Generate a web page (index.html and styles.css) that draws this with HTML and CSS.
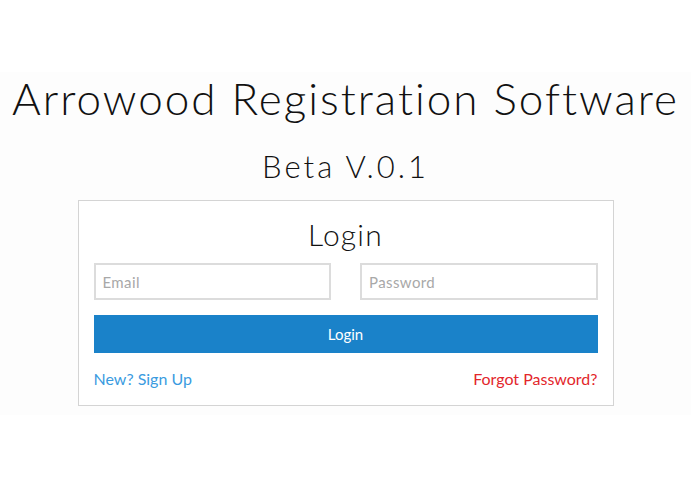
FILE: index.html
```html
<!DOCTYPE html>
<html lang="en">
<head>
<meta charset="utf-8">
<title>Arrowood Registration Software</title>
<link rel="stylesheet" href="styles.css">
</head>
<body>
<main class="page">
  <section class="band">
    <h1 class="title">Arrowood Registration Software</h1>
    <h2 class="subtitle">Beta V.0.1</h2>
    <form class="card">
      <h3 class="card-title">Login</h3>
      <div class="fields">
        <input class="field" type="email" placeholder="Email">
        <input class="field" type="password" placeholder="Password">
      </div>
      <button class="btn" type="button">Login</button>
      <div class="links">
        <a class="link link-signup" href="#">New? Sign Up</a>
        <a class="link link-forgot" href="#">Forgot Password?</a>
      </div>
    </form>
  </section>
</main>
</body>
</html>
```
FILE: styles.css
```css
html, body {
  margin: 0;
  padding: 0;
  background: #ffffff;
}
body {
  font-family: Lato, "Open Sans", "Liberation Sans", sans-serif;
  color: #111;
}
.page {
  padding-top: 72px;
  padding-right: 4px;
}
.band {
  background: #fdfdfd;
  display: flex;
  flex-direction: column;
  align-items: center;
  padding-bottom: 9px;
}
.title {
  margin: 0;
  font-size: 44px;
  line-height: 52px;
  font-weight: 300;
  letter-spacing: 2px;
  color: #111;
}
.subtitle {
  margin: 24px 0 0;
  font-size: 31px;
  line-height: 36px;
  font-weight: 300;
  letter-spacing: 3px;
  color: #111;
}
.card {
  margin-top: 16px;
  width: 536px;
  box-sizing: border-box;
  border: 1px solid #d4d4d4;
  background: #fff;
  padding: 15px 15px 16px;
  display: flex;
  flex-direction: column;
}
.card-title {
  margin: 0;
  text-align: center;
  font-size: 30px;
  line-height: 36px;
  font-weight: 300;
  letter-spacing: 1.2px;
  color: #111;
}
.fields {
  margin-top: 11px;
  display: grid;
  grid-template-columns: 1fr 1fr;
  gap: 29px;
}
.field {
  box-sizing: border-box;
  height: 37px;
  border: 2px solid #dcdcdc;
  background: #fff;
  padding: 0 7px;
  font-family: inherit;
  font-size: 15px;
  letter-spacing: 0.4px;
  color: #333;
  outline: none;
}
.field::placeholder {
  color: #a8a8a8;
}
.btn {
  margin-top: 15px;
  height: 38px;
  border: none;
  background: #1a82c9;
  color: #fff;
  font-family: inherit;
  font-size: 15px;
  cursor: pointer;
}
.links {
  margin-top: 16px;
  display: flex;
  justify-content: space-between;
  align-items: baseline;
}
.link {
  font-size: 16px;
  line-height: 20px;
  text-decoration: none;
}
.link-signup { color: #3a9bdf; }
.link-forgot { color: #e3262b; }
```
